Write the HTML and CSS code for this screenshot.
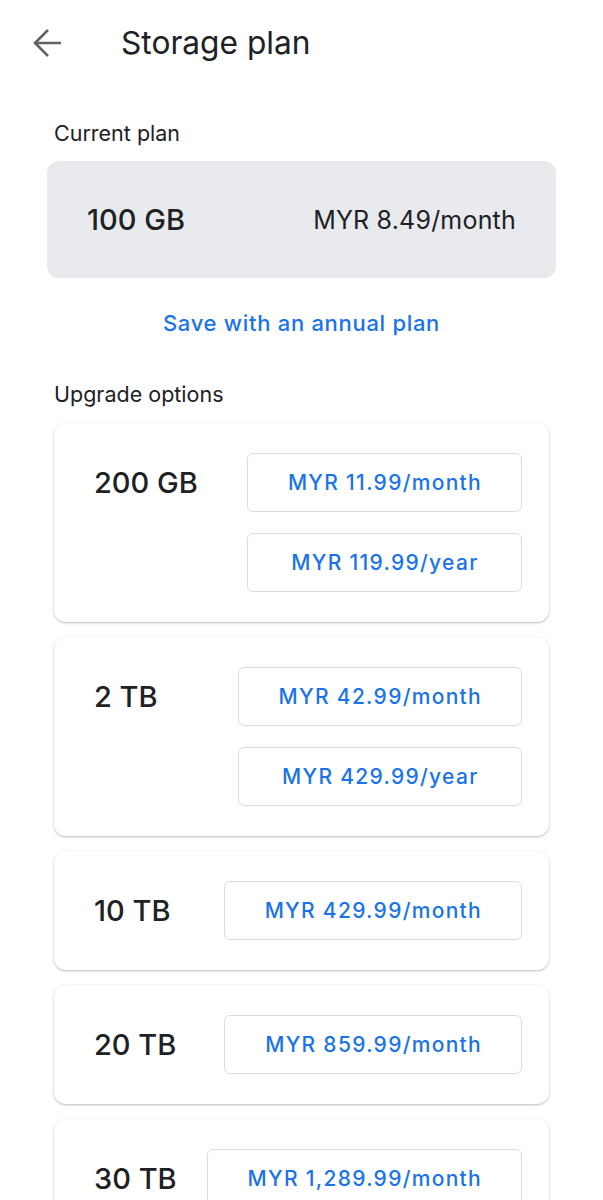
FILE: index.html
```html
<!DOCTYPE html>
<html lang="en">
<head>
  <meta charset="UTF-8">
  <title>Storage plan</title>
  <link rel="stylesheet" href="styles.css">
</head>
<body>
  <header class="top-bar">
    <button class="back-btn" aria-label="Back">
      <svg viewBox="0 0 30 30" width="30" height="30">
        <path d="M3 15H29M16 2L3 15L16 28" fill="none" stroke="#5f6368" stroke-width="2.6"/>
      </svg>
    </button>
    <h1 class="title">Storage plan</h1>
  </header>

  <main class="content">
    <div class="section-label">Current plan</div>
    <div class="current-plan">
      <span class="current-size">100 GB</span>
      <span class="current-price">MYR 8.49/month</span>
    </div>

    <a class="annual-link" href="#">Save with an annual plan</a>

    <div class="section-label">Upgrade options</div>

    <div class="plan-list">
      <div class="plan-card">
        <div class="plan-size">200 GB</div>
        <div class="price-buttons">
          <button class="price-btn">MYR 11.99/month</button>
          <button class="price-btn">MYR 119.99/year</button>
        </div>
      </div>

      <div class="plan-card">
        <div class="plan-size">2 TB</div>
        <div class="price-buttons">
          <button class="price-btn">MYR 42.99/month</button>
          <button class="price-btn">MYR 429.99/year</button>
        </div>
      </div>

      <div class="plan-card">
        <div class="plan-size">10 TB</div>
        <div class="price-buttons">
          <button class="price-btn">MYR 429.99/month</button>
        </div>
      </div>

      <div class="plan-card">
        <div class="plan-size">20 TB</div>
        <div class="price-buttons">
          <button class="price-btn">MYR 859.99/month</button>
        </div>
      </div>

      <div class="plan-card">
        <div class="plan-size">30 TB</div>
        <div class="price-buttons">
          <button class="price-btn">MYR 1,289.99/month</button>
        </div>
      </div>
    </div>
  </main>
</body>
</html>
```

FILE: styles.css
```css
body {
  margin: 0;
  font-family: Inter, Roboto, sans-serif;
  color: #202124;
  background: #fff;
}

.top-bar {
  display: flex;
  align-items: center;
  height: 86px;
}

.back-btn {
  display: flex;
  align-items: center;
  justify-content: center;
  width: 30px;
  height: 30px;
  margin-left: 32px;
  padding: 0;
  border: none;
  background: transparent;
}

.title {
  margin: 0 0 0 59px;
  font-size: 31.7px;
  font-weight: 400;
  line-height: 38px;
}

.content {
  padding: 0 54px;
}

.section-label {
  font-size: 21.5px;
  line-height: 28px;
  margin-top: 33px;
}

.current-plan {
  display: flex;
  align-items: center;
  justify-content: space-between;
  margin: 14px -7px 0 -7px;
  height: 117px;
  padding: 0 40px;
  background: #e8eaed;
  border-radius: 12px;
}

.current-size {
  font-size: 29px;
  font-weight: 500;
}

.current-price {
  font-size: 25px;
  letter-spacing: 0.2px;
}

.annual-link {
  display: block;
  margin-top: 31px;
  line-height: 28px;
  text-align: center;
  font-size: 22px;
  font-weight: 500;
  letter-spacing: 0.7px;
  color: #1a73e8;
  text-decoration: none;
}

.annual-link + .section-label {
  margin-top: 43px;
}

.plan-list {
  display: flex;
  flex-direction: column;
  gap: 15px;
  margin-top: 15px;
}

.plan-card {
  display: flex;
  align-items: flex-start;
  justify-content: space-between;
  padding: 30px 27px 30px 40px;
  background: #fff;
  border-radius: 12px;
  box-shadow: 0 1px 3px rgba(60, 64, 67, 0.28), 0 1px 1px rgba(60, 64, 67, 0.1);
}

.plan-size {
  font-size: 29px;
  font-weight: 500;
  line-height: 59px;
}

.price-buttons {
  display: flex;
  flex-direction: column;
  gap: 21px;
}

.price-btn {
  height: 59px;
  padding: 0 39px 0 40px;
  font-family: inherit;
  font-size: 21px;
  font-weight: 500;
  letter-spacing: 1.3px;
  color: #1a73e8;
  background: #fff;
  border: 1px solid #dadce0;
  border-radius: 6px;
}
```
